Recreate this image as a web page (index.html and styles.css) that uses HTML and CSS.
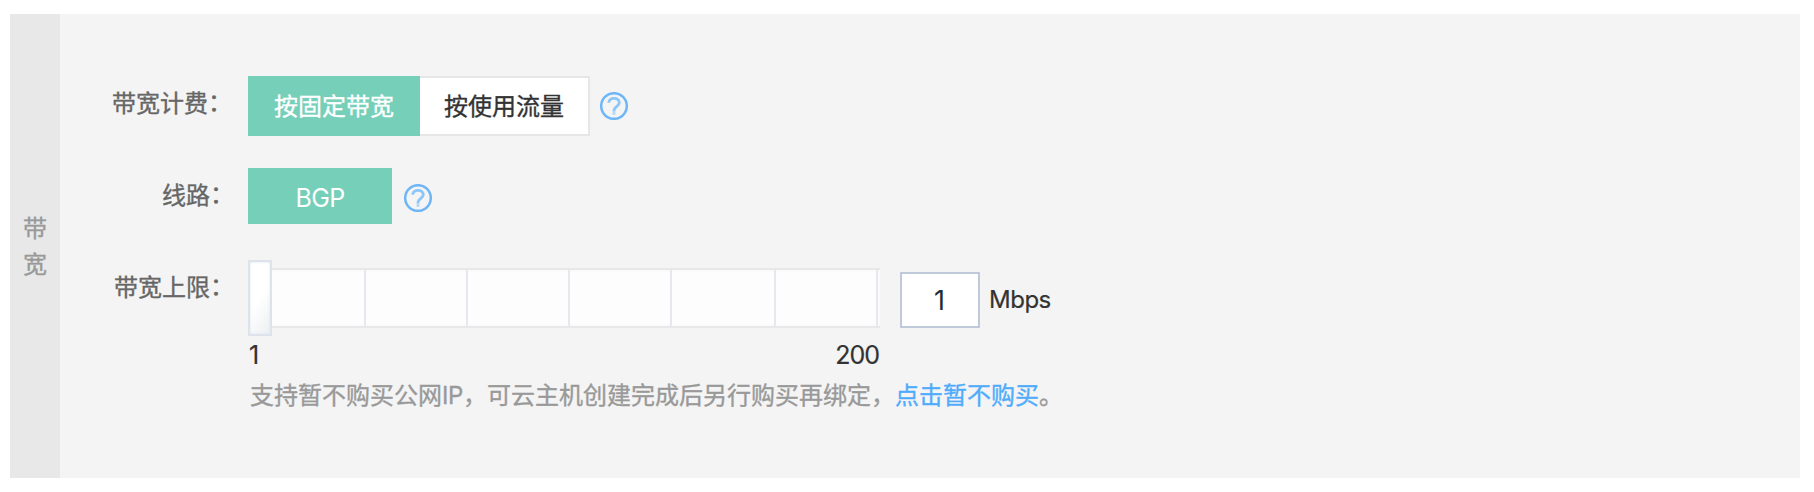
FILE: index.html
```html
<!DOCTYPE html>
<html lang="zh-CN">
<head>
<meta charset="utf-8">
<title>带宽</title>
<link rel="stylesheet" href="styles.css">
</head>
<body>
<section class="panel">
  <h2 class="panel-title">带宽</h2>
  <div class="panel-body">
    <div class="row row-billing">
      <div class="label label-billing">带宽计费<span class="colon">：</span></div>
      <div class="segmented">
        <button class="option option-active">按固定带宽</button><button class="option option-plain">按使用流量</button>
      </div>
      <svg class="help" viewBox="0 0 28 28"><circle cx="14" cy="14" r="12.8"/><path d="M8.8 10.8C8.8 4.9 19.3 4.9 19.3 10.7C19.3 14.2 14 14.7 14 18.6V19.3"/><path class="help-dot" d="M14 19V23"/></svg>
    </div>
    <div class="row row-line">
      <div class="label">线路<span class="colon">：</span></div>
      <button class="option option-active option-bgp">BGP</button>
      <svg class="help help-line" viewBox="0 0 28 28"><circle cx="14" cy="14" r="12.8"/><path d="M8.8 10.8C8.8 4.9 19.3 4.9 19.3 10.7C19.3 14.2 14 14.7 14 18.6V19.3"/><path class="help-dot" d="M14 19V23"/></svg>
    </div>
    <div class="row row-limit">
      <div class="label label-limit">带宽上限<span class="colon">：</span></div>
      <div class="limit">
        <div class="limit-controls">
          <div class="slider">
            <div class="track"><i></i><i></i><i></i><i></i><i></i><i></i></div>
            <span class="handle"></span>
          </div>
          <input class="amount" type="text" value="1">
          <span class="unit">Mbps</span>
        </div>
        <div class="scale"><span>1</span><span>200</span></div>
        <p class="hint">支持暂不购买公网<span class="latin">IP</span>，可云主机创建完成后另行购买再绑定，<a class="link">点击暂不购买</a>。</p>
      </div>
    </div>
  </div>
</section>
</body>
</html>
```
FILE: styles.css
```css
* {
  box-sizing: border-box;
}

body {
  margin: 0;
  padding: 14px 14px 14px 10px;
  background: #fff;
  color: #333;
  font: 24px/36px "Noto Sans CJK SC", sans-serif;
  -webkit-text-stroke: 0.35px;
}

.panel {
  display: flex;
  height: 464px;
  background: #f4f4f4;
}

.panel-title {
  display: flex;
  align-items: center;
  width: 50px;
  margin: 0;
  padding: 0 13px 3px;
  background: #e8e8e8;
  color: #999;
  font-size: 24px;
  font-weight: 400;
}

.panel-body {
  flex: 1;
  padding-top: 62px;
}

.row {
  display: flex;
  align-items: flex-start;
}

.row-billing,
.row-line {
  height: 92px;
}

.label {
  width: 188px;
  margin-top: 8px;
  padding-right: 14px;
  color: #666;
  text-align: right;
  white-space: nowrap;
}

.label-billing {
  padding-right: 16px;
}

.colon {
  line-height: 0;
  vertical-align: 1px;
}

.segmented {
  display: flex;
}

.option {
  height: 60px;
  margin: 0;
  padding: 0 0 3px;
  border: 0;
  font: inherit;
}

.option-active {
  width: 172px;
  background: #75cfb9;
  color: #fff;
}

.option-plain {
  width: 170px;
  border: 2px solid #e6e6e6;
  border-left: 0;
  background: #fff;
  color: #333;
}

.option-bgp {
  width: 144px;
  height: 56px;
  padding: 3px 0 0;
  font-family: Inter, sans-serif;
  font-size: 25px;
  letter-spacing: -0.6px;
  -webkit-text-stroke: 0;
}

.help {
  width: 28px;
  height: 28px;
  margin: 16px 0 0 10px;
  fill: none;
  stroke: #6eb6f7;
  stroke-width: 2.5;
}

.help path {
  stroke: #8cc6f9;
  stroke-width: 2.8;
}

.help .help-dot {
  stroke: #b5dafa;
}

.help-line {
  margin-left: 12px;
}

.limit-controls {
  display: flex;
  height: 76px;
}

.slider {
  position: relative;
  width: 632px;
  padding-top: 8px;
}

.track {
  display: grid;
  grid-template-columns: 118px 102px 102px 102px 104px 102px;
  height: 60px;
  border: solid #e8e8ea;
  border-width: 2px 0;
  background: #fdfdfd;
  box-shadow: inset 0 0 4px #f3f5f5;
}

.track i {
  border-right: 2px solid #e6e8ed;
}

.handle {
  position: absolute;
  top: 0;
  left: 0;
  width: 24px;
  height: 76px;
  border: 2px solid #dce3ea;
  background: linear-gradient(125deg, #fff 50%, #eceff2);
  box-shadow: inset 0 0 3px #dfe7ee;
}

.amount {
  width: 80px;
  height: 56px;
  margin: 12px 0 0 20px;
  padding: 0 1px 0 0;
  border: 2px solid #bfc9d9;
  border-radius: 0;
  background: #fff;
  color: #222b36;
  font: 27px Inter, sans-serif;
  text-align: center;
  -webkit-text-stroke: 0;
}

.unit {
  margin: 22px 0 0 9px;
  font-family: Inter, sans-serif;
  letter-spacing: -0.5px;
  -webkit-text-stroke: 0.2px;
}

.scale {
  display: flex;
  justify-content: space-between;
  width: 631px;
  height: 40px;
  padding: 1px 0 0 1px;
  font-family: Inter, sans-serif;
  font-size: 25px;
  letter-spacing: -1px;
  -webkit-text-stroke: 0.2px;
}

.hint {
  margin: 0 0 0 2px;
  color: #999;
  white-space: nowrap;
}

.latin {
  font-family: Inter, sans-serif;
  letter-spacing: -0.4px;
}

.link {
  color: #50acfb;
}
```
